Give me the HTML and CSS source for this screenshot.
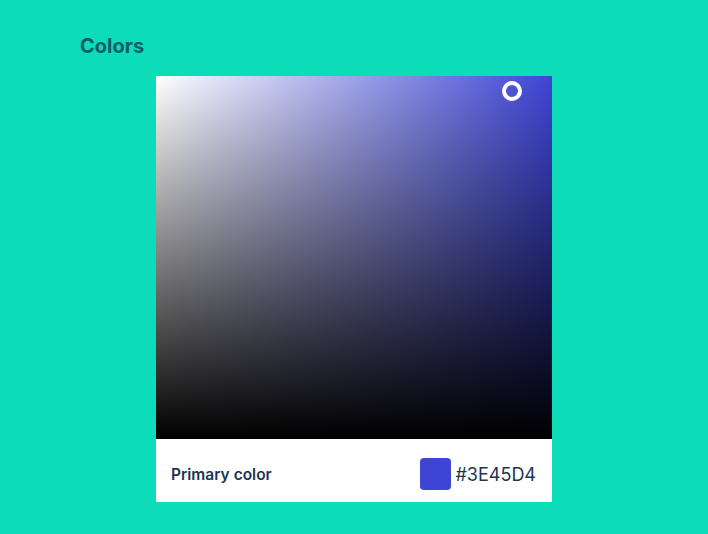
FILE: index.html
```html
<!DOCTYPE html>
<html lang="en">
<head>
  <meta charset="UTF-8">
  <title>Colors</title>
  <link rel="stylesheet" href="styles.css">
</head>
<body>
  <div class="page">
    <h1>Colors</h1>

    <div class="picker">
      <div class="area">
        <div class="area-white">
          <div class="area-black"></div>
        </div>
        <span class="handle"></span>
      </div>
      <div class="footer">
        <span class="label">Primary color</span>
        <div class="value">
          <span class="swatch"></span>
          <span class="hex">#3E45D4</span>
        </div>
      </div>
    </div>
  </div>
</body>
</html>
```

FILE: styles.css
```css
body {
  margin: 0;
  font-family: 'Inter', 'Liberation Sans', sans-serif;
  background: #0cdcb8;
}

.page {
  padding: 34px 0 0 80px;
}

h1 {
  margin: 0 0 18px;
  font-size: 20px;
  font-weight: 700;
  color: #0e5d66;
  line-height: 24px;
}

.picker {
  width: 396px;
  margin-left: 76px;
  background: #fff;
}

.area {
  position: relative;
  height: 363px;
  background: #3e45d4;
}

.area-white {
  height: 100%;
  background: linear-gradient(to right, #fff, rgba(255,255,255,0));
}

.area-black {
  height: 100%;
  background: linear-gradient(to top, #000, rgba(0,0,0,0));
}

.handle {
  position: absolute;
  left: 346px;
  top: 5px;
  width: 12px;
  height: 12px;
  border: 4px solid #fff;
  border-radius: 50%;
}

.footer {
  height: 63px;
  box-sizing: border-box;
  display: flex;
  align-items: center;
  justify-content: space-between;
  padding: 7px 16px 0 15px;
}

.label {
  font-size: 15.5px;
  font-weight: 600;
  color: #1c3550;
}

.value {
  display: flex;
  align-items: center;
  gap: 4px;
}

.swatch {
  width: 31px;
  height: 32px;
  border-radius: 4px;
  background: #3e45d4;
}

.hex {
  font-size: 18px;
  color: #1c3550;
}
```
